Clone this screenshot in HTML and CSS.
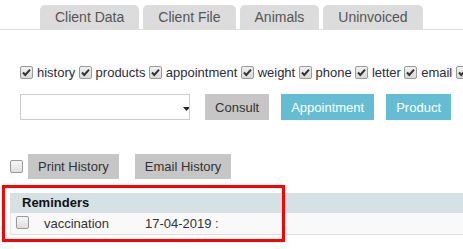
FILE: index.html
```html
<!DOCTYPE html>
<html>
<head>
<meta charset="utf-8">
<link rel="stylesheet" href="styles.css">
</head>
<body>
<div class="tabs">
  <div class="tab">Client Data</div>
  <div class="tab">Client File</div>
  <div class="tab">Animals</div>
  <div class="tab">Uninvoiced</div>
</div>

<div class="filters">
  <label class="opt"><input type="checkbox" class="cb" checked>history</label>
  <label class="opt"><input type="checkbox" class="cb" checked>products</label>
  <label class="opt"><input type="checkbox" class="cb" checked>appointment</label>
  <label class="opt"><input type="checkbox" class="cb" checked>weight</label>
  <label class="opt"><input type="checkbox" class="cb" checked>phone</label>
  <label class="opt"><input type="checkbox" class="cb" checked>letter</label>
  <label class="opt"><input type="checkbox" class="cb" checked>email</label>
  <label class="opt"><input type="checkbox" class="cb" checked></label>
</div>

<div class="actions">
  <select class="select"><option></option></select>
  <button class="btn btn-gray">Consult</button>
  <button class="btn btn-info">Appointment</button>
  <button class="btn btn-info">Product</button>
</div>

<div class="history">
  <input type="checkbox" class="cb">
  <button class="btn btn-gray">Print History</button>
  <button class="btn btn-gray">Email History</button>
</div>

<div class="reminders">
  <div class="rem-head">Reminders</div>
  <div class="rem-row">
    <input type="checkbox" class="cb">
    <span class="rem-name">vaccination</span>
    <span class="rem-date">17-04-2019 :</span>
  </div>
  <div class="highlight"></div>
</div>
</body>
</html>
```

FILE: styles.css
```css
* { box-sizing: border-box; }
html, body { margin: 0; padding: 0; background: #fff; }
body {
  font-family: "Liberation Sans", Arial, sans-serif;
  font-size: 13px;
  color: #333;
  width: 463px;
  height: 249px;
  overflow: hidden;
}

.tabs {
  display: flex;
  gap: 4px;
  padding: 5px 0 0 40px;
  border-bottom: 1px solid #ddd;
}
.tab {
  height: 24px;
  line-height: 24px;
  padding: 0 15px;
  background: #dcdcdc;
  border-radius: 5px 5px 0 0;
  font-size: 14px;
  color: #555;
}

.cb {
  -webkit-appearance: none;
  appearance: none;
  width: 13px;
  height: 13px;
  margin: 0;
  flex: none;
  border: 1px solid #9a9a9a;
  border-radius: 2px;
  background: linear-gradient(#f6f6f6, #dedede);
}
.cb:checked {
  background: url("data:image/svg+xml;utf8,<svg xmlns='http://www.w3.org/2000/svg' width='11' height='11' viewBox='0 0 11 11'><path d='M2 5.5 L4.3 8 L9 2.6' fill='none' stroke='%23333' stroke-width='2'/></svg>") center/11px 11px no-repeat, linear-gradient(#f2f2f2, #d8d8d8);
}

.filters {
  display: flex;
  align-items: center;
  margin-top: 34px;
  padding-left: 20px;
  height: 16px;
  white-space: nowrap;
  overflow: hidden;
}
.opt {
  display: flex;
  align-items: center;
  gap: 4px;
  margin-right: 3.3px;
  color: #2b2b3a;
  flex: none;
}

.actions {
  display: flex;
  align-items: center;
  margin-top: 14px;
  padding-left: 20px;
  height: 26px;
}
.select {
  -webkit-appearance: none;
  appearance: none;
  width: 178px;
  height: 26px;
  border: 1px solid #ccc;
  border-radius: 0;
  background: #fff url("data:image/svg+xml;utf8,<svg xmlns='http://www.w3.org/2000/svg' width='7' height='4'><path d='M0 0 H7 L3.5 4 Z' fill='%23222'/></svg>") no-repeat 162px 12px;
  margin: 0 15px 0 0;
}
.btn {
  font-family: "Liberation Sans", Arial, sans-serif;
  font-size: 13px;
  height: 26px;
  padding: 0 10px;
  border: none;
  border-radius: 0;
  margin: 0 12px 0 0;
}
.btn-gray { background: #c6c6c6; color: #333; }
.btn-info { background: #64bdd3; color: #fff; }

.history {
  display: flex;
  align-items: center;
  margin-top: 34px;
  padding-left: 10px;
  height: 25px;
}
.history .cb { margin-right: 5px; }
.history .btn { height: 25px; margin-right: 16px; }

.reminders {
  position: relative;
  margin-top: 14px;
  margin-left: 10px;
}
.rem-head {
  height: 20px;
  line-height: 20px;
  background: #d6e1e5;
  font-weight: bold;
  color: #111;
  padding-left: 12px;
}
.rem-row {
  display: flex;
  align-items: center;
  height: 22px;
  background: #f9f9f9;
  border-bottom: 1px solid #ddd;
  border-left: 1px solid #e6e6e6;
  padding-left: 5px;
}
.rem-row .cb { margin-top: -2px; }
.rem-name { margin-left: 15px; width: 101px; }

.highlight {
  position: absolute;
  left: -8px;
  top: -8px;
  width: 283px;
  height: 57px;
  border: 3px solid #f00;
  pointer-events: none;
}
```
